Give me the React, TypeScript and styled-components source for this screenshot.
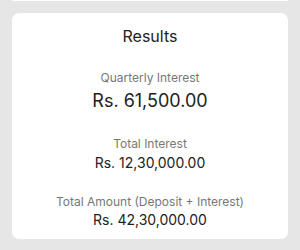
import React from "react";
import styled, { createGlobalStyle } from "styled-components";

const Global = createGlobalStyle`
  html, body { margin: 0; padding: 0; background: #e6e6e6; }
  body { font-family: Inter, "Liberation Sans", sans-serif; -webkit-font-smoothing: antialiased; }
`;

const Page = styled.div`
  width: 300px;
  height: 250px;
  box-sizing: border-box;
  padding: 0 12px;
  display: flex;
  flex-direction: column;
  gap: 12px;
  overflow: hidden;
  background: #e6e6e6;
`;

const PrevCard = styled.div`
  height: 1px;
  background: #fff;
  border-radius: 0 0 6px 6px;
`;

const Card = styled.div`
  background: #fff;
  border-radius: 7px;
  height: 226px;
  box-sizing: border-box;
  padding: 13px 10px 0;
  display: flex;
  flex-direction: column;
  align-items: center;
`;

const Title = styled.h2`
  margin: 0 0 24px;
  font-size: 16px;
  font-weight: 400;
  color: #222;
  line-height: 20px;
`;

const Item = styled.div<{ $gap: number }>`
  display: flex;
  flex-direction: column;
  align-items: center;
  margin-bottom: ${(p) => p.$gap}px;
`;

const Label = styled.div`
  font-size: 12px;
  color: #777;
  line-height: 16px;
`;

const Value = styled.div<{ $size: number; $top: number }>`
  font-size: ${(p) => p.$size}px;
  color: #222;
  line-height: ${(p) => p.$size + 6}px;
  margin-top: ${(p) => p.$top}px;
`;

export default function App() {
  return (
    <>
      <Global />
      <Page>
        <PrevCard />
        <Card>
          <Title>Results</Title>
          <Item $gap={23}>
            <Label>Quarterly Interest</Label>
            <Value $size={18} $top={3}>Rs. 61,500.00</Value>
          </Item>
          <Item $gap={21}>
            <Label>Total Interest</Label>
            <Value $size={14} $top={1}>Rs. 12,30,000.00</Value>
          </Item>
          <Item $gap={0}>
            <Label>Total Amount (Deposit + Interest)</Label>
            <Value $size={14} $top={0}>Rs. 42,30,000.00</Value>
          </Item>
        </Card>
      </Page>
    </>
  );
}
